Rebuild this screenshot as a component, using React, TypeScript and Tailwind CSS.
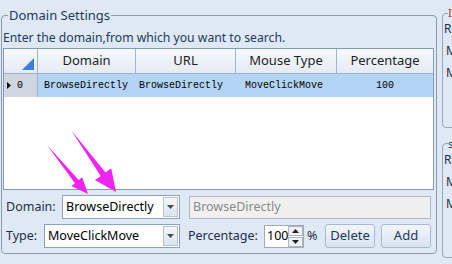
import React from 'react';

const ui = { fontFamily: '"Noto Sans", "Open Sans", sans-serif' };
const mono = { fontFamily: '"Liberation Mono", "DejaVu Sans Mono", monospace' };

const Combo = ({ value, width }: { value: string; width: string }) => (
  <div className={`${width} h-[24px] bg-white border border-[#8aa2c1] flex items-center justify-between pl-[3px] pr-[1px]`}>
    <span className="text-[12.5px] leading-none text-black">{value}</span>
    <div className="w-[15px] h-[20px] border border-[#b6c4d6] bg-gradient-to-b from-[#f4f7fb] to-[#dbe3ee] flex items-center justify-center">
      <svg width="7" height="4" viewBox="0 0 7 4"><path d="M0 0h7L3.5 4z" fill="#4a4a4a" /></svg>
    </div>
  </div>
);

const RightBox = ({ legend, legendColor }: { legend: string; legendColor: string }) => (
  <fieldset className="border border-[#9aa6b4] rounded-[4px] pl-[1px] text-[12px] leading-none text-[#1e2e4a] flex-1 overflow-hidden">
    <legend className="ml-[4px] text-[11px] leading-[12px]" style={{ color: legendColor }}>{legend}</legend>
    <div className="mt-[4px]">R</div>
    <div className="mt-[10px] ml-[2px]">M</div>
    <div className="mt-[10px] ml-[2px]">M</div>
  </fieldset>
);

export default function App() {
  return (
    <div className="relative w-[452px] h-[264px] overflow-hidden bg-[#dfe9f5]" style={ui}>
      <div className="flex gap-[5px] pt-[7px]">
        {/* Domain Settings group */}
        <fieldset className="ml-[1px] w-[436px] h-[247px] border border-[#8e9aa8] rounded-[4px] pl-[1px] shrink-0">
          <legend className="ml-[5px] px-[1px] text-[13px] leading-[16px] text-[#1e395b]">Domain Settings</legend>
          <div className="mt-[6px] text-[12.2px] leading-[18px] text-[#1e395b] whitespace-nowrap">
            Enter the domain,from which you want to search.
          </div>

          {/* grid */}
          <div className="mt-[1px] w-[431px] h-[142px] border border-[#7f9bbd] bg-white flex flex-col">
            <div className="flex h-[25px] bg-gradient-to-b from-[#f7f9fc] to-[#e4ebf5] border-b border-[#9fb4cf] text-[13px] text-[#1e1e1e]">
              <div className="w-[34px] border-r border-[#9fb4cf] relative">
                <svg className="absolute right-[3px] bottom-[3px]" width="12" height="12" viewBox="0 0 12 12">
                  <path d="M12 0V12H0z" fill="#3c7fd6" />
                </svg>
              </div>
              <div className="w-[98px] border-r border-[#9fb4cf] flex items-center justify-center">Domain</div>
              <div className="w-[100px] border-r border-[#9fb4cf] flex items-center justify-center">URL</div>
              <div className="w-[101px] border-r border-[#9fb4cf] flex items-center justify-center">Mouse Type</div>
              <div className="flex-1 flex items-center justify-center">Percentage</div>
            </div>
            <div className="flex h-[23px] text-[10px] text-black" style={mono}>
              <div className="w-[34px] bg-[#cfd6df] border-r border-[#9fb4cf] flex items-center pl-[3px] gap-[6px]">
                <svg width="4" height="7" viewBox="0 0 4 7"><path d="M0 0L4 3.5L0 7z" fill="#111" /></svg>
                <span>0</span>
              </div>
              <div className="flex-1 flex bg-[#b3d4f4]">
                <div className="w-[98px] flex items-center pl-[6px]">BrowseDirectly</div>
                <div className="w-[100px] flex items-center pl-[3px]">BrowseDirectly</div>
                <div className="w-[101px] flex items-center pl-[9px]">MoveClickMove</div>
                <div className="flex-1 flex items-center justify-center">100</div>
              </div>
            </div>
          </div>

          {/* Domain row */}
          <div className="mt-[5px] flex items-center text-[12.5px] text-[#1e2e4a]">
            <span className="w-[59px] pl-[3px]">Domain:</span>
            <Combo value="BrowseDirectly" width="w-[118px]" />
            <div className="ml-[9px] w-[242px] h-[23px] border border-[#b2b8c0] bg-[#f0f0f0] flex items-center pl-[3px] text-[12.5px] text-[#8a8a8a]">
              BrowseDirectly
            </div>
          </div>

          {/* Type row */}
          <div className="mt-[5px] flex items-center text-[12.5px] text-[#1e2e4a]">
            <span className="w-[41px] pl-[3px]">Type:</span>
            <Combo value="MoveClickMove" width="w-[136px]" />
            <span className="ml-[8px] w-[76px]">Percentage:</span>
            <div className="w-[40px] h-[23px] border border-[#a9a9a9] bg-white flex items-center justify-between">
              <span className="pl-[2px] text-[12.5px] text-black leading-none">100</span>
              <div className="w-[15px] h-[21px] flex flex-col gap-[1px]">
                <div className="flex-1 border border-[#a9b6c6] bg-[#eef2f7] flex items-center justify-center">
                  <svg width="7" height="4" viewBox="0 0 7 4"><path d="M0 4h7L3.5 0z" fill="#222" /></svg>
                </div>
                <div className="flex-1 border border-[#a9b6c6] bg-[#eef2f7] flex items-center justify-center">
                  <svg width="7" height="4" viewBox="0 0 7 4"><path d="M0 0h7L3.5 4z" fill="#222" /></svg>
                </div>
              </div>
            </div>
            <span className="ml-[3px] w-[18px]">%</span>
            <button className="w-[50px] h-[24px] border border-[#a7b9d0] rounded-[3px] bg-gradient-to-b from-[#f2f6fb] to-[#d8e3f0] text-[13px] text-[#1e395b]">
              Delete
            </button>
            <button className="ml-[6px] w-[50px] h-[24px] border border-[#a7b9d0] rounded-[3px] bg-gradient-to-b from-[#f2f6fb] to-[#d8e3f0] text-[13px] text-[#1e395b]">
              Add
            </button>
          </div>
        </fieldset>

        {/* right side groups (cut off by the window edge) */}
        <div className="flex flex-col gap-[10px] w-[20px] h-[251px] shrink-0">
          <RightBox legend="I" legendColor="#a0302a" />
          <RightBox legend="s" legendColor="#1e395b" />
        </div>
      </div>

      {/* annotation arrows */}
      <svg className="absolute left-0 top-0 pointer-events-none" width="452" height="264">
        <polygon points="47,145 78.7,180 82.2,177.2 88,194 71.4,186 74.9,183.2" fill="#f024f0" />
        <polygon points="71,130 105.5,172.4 111.2,168.3 116,192 95,180.1 100.7,176" fill="#f024f0" />
      </svg>
    </div>
  );
}
